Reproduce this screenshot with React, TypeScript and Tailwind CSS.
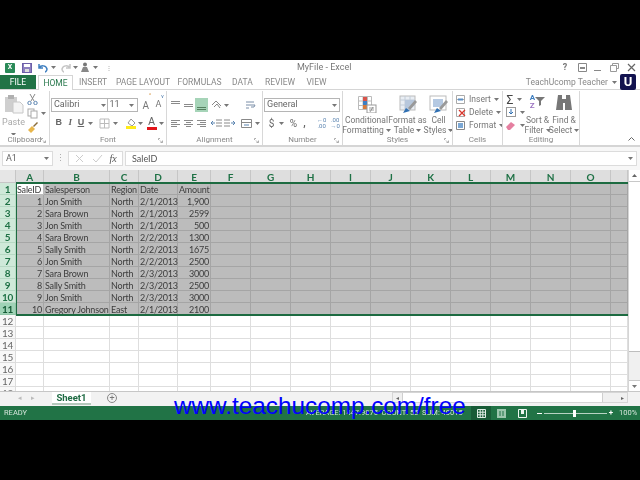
import type { ReactNode } from 'react'

const rows: string[][] = [
  ['SaleID', 'Salesperson', 'Region', 'Date', 'Amount'],
  ['1', 'Jon Smith', 'North', '2/1/2013', '1,900'],
  ['2', 'Sara Brown', 'North', '2/1/2013', '2599'],
  ['3', 'Jon Smith', 'North', '2/1/2013', '500'],
  ['4', 'Sara Brown', 'North', '2/2/2013', '1300'],
  ['5', 'Sally Smith', 'North', '2/2/2013', '1675'],
  ['6', 'Jon Smith', 'North', '2/2/2013', '2500'],
  ['7', 'Sara Brown', 'North', '2/3/2013', '3000'],
  ['8', 'Sally Smith', 'North', '2/3/2013', '2500'],
  ['9', 'Jon Smith', 'North', '2/3/2013', '3000'],
  ['10', 'Gregory Johnson', 'East', '2/1/2013', '2100']
]
const letters = ['A', 'B', 'C', 'D', 'E', 'F', 'G', 'H', 'I', 'J', 'K', 'L', 'M', 'N', 'O', '']
const gridCols =
  'grid grid-cols-[16px_28px_66px_29px_39px_33px_40px_40px_40px_40px_40px_40px_40px_40px_40px_40px_17px]'

function Caret({ className = 'mx-[3px]' }: { className?: string }): React.JSX.Element {
  return (
    <svg width="5" height="3" viewBox="0 0 5 3" className={`shrink-0 ${className}`}>
      <path d="M0 0h5L2.5 3z" fill="#777" />
    </svg>
  )
}

function Ico({
  w = 11,
  h = 11,
  children,
  className = ''
}: {
  w?: number
  h?: number
  children: ReactNode
  className?: string
}): React.JSX.Element {
  return (
    <svg width={w} height={h} viewBox={`0 0 ${w} ${h}`} className={`shrink-0 ${className}`} fill="none">
      {children}
    </svg>
  )
}

function Lines({ kind }: { kind: 'left' | 'center' | 'right' }): React.JSX.Element {
  const x = kind === 'left' ? [1, 1, 1, 1] : kind === 'center' ? [1, 3, 1, 3] : [1, 4, 1, 4]
  const w = kind === 'center' ? [9, 5, 9, 5] : [9, 6, 9, 6]
  return (
    <Ico>
      {[2, 4, 6, 8].map((y, i) => (
        <rect key={y} x={x[i]} y={y} width={w[i]} height="1" fill="#8a8a8a" />
      ))}
    </Ico>
  )
}

function Group({
  width,
  label,
  launcher,
  children
}: {
  width: string
  label: string
  launcher?: boolean
  children: ReactNode
}): React.JSX.Element {
  return (
    <div className={`${width} flex h-[54px] shrink-0 flex-col border-r border-[#d8d8d8]`}>
      <div className="h-[44px] shrink-0 overflow-hidden">{children}</div>
      <div className="relative flex h-[10px] items-center justify-center text-[8px] leading-none text-[#888]">
        {label}
        {launcher && (
          <svg width="5" height="5" viewBox="0 0 5 5" className="absolute right-[3px] top-[3px]">
            <path d="M.5 2V.5H2M2 2.5l2 2M2.5 4.5H4.5V2.5" stroke="#999" strokeWidth=".8" fill="none" />
          </svg>
        )}
      </div>
    </div>
  )
}

function Clipboard(): React.JSX.Element {
  return (
    <Group width="w-[50px]" label="Clipboard" launcher>
      <div className="flex">
        <div className="flex w-[28px] flex-col items-center pt-[3px]">
          <svg width="20" height="20" viewBox="0 0 20 20">
            <rect x="1" y="3" width="12" height="15" fill="#cfcfcf" />
            <rect x="4" y="1" width="6" height="4" fill="#b0b0b0" />
            <path d="M9 8h7l3 3v8H9z" fill="#f4f4f4" stroke="#c8c8c8" />
          </svg>
          <span className="mt-[3px] text-[9px] leading-[11px] text-[#aaa]">Paste</span>
          <Caret className="mt-[5px]" />
        </div>
        <div className="flex flex-col gap-[3px] pt-[3px]">
          <Ico w={11} h={11}>
            <path d="M3 0l4 7M8 0L4 7" stroke="#888" />
            <circle cx="2.5" cy="9" r="1.7" stroke="#5b84b0" />
            <circle cx="8.5" cy="9" r="1.7" stroke="#5b84b0" />
          </Ico>
          <div className="flex items-center">
            <Ico w={11} h={11}>
              <rect x="1" y="1" width="6" height="7" fill="#fff" stroke="#aaa" />
              <rect x="4" y="3" width="6" height="7" fill="#fff" stroke="#aaa" />
            </Ico>
            <Caret />
          </div>
          <Ico w={11} h={11}>
            <path d="M10 0L6 4l1 1 4-4z" fill="#8a6d3b" />
            <path d="M1 8l4-4 3 3-4 4z" fill="#e8b64c" />
          </Ico>
        </div>
      </div>
    </Group>
  )
}

function Font(): React.JSX.Element {
  return (
    <Group width="w-[117px]" label="Font" launcher>
      <div className="flex flex-col pl-[1px] pt-[7px]">
        <div className="flex h-[14px] items-center">
          <div className="flex h-[14px] w-[57px] items-center justify-between border border-[#b5b5b5] pl-[2px] pr-[1px] text-[9px] text-[#666]">
            Calibri
            <Caret className="" />
          </div>
          <div className="flex h-[14px] w-[31px] items-center justify-between border border-l-0 border-[#b5b5b5] pl-[2px] pr-[3px] text-[9px] text-[#666]">
            11
            <Caret className="" />
          </div>
          <span className="ml-[2px] flex w-[13px] justify-center text-[10px] text-[#777]">
            A<sup className="text-[5px] text-[#d08a30]">^</sup>
          </span>
          <span className="flex w-[13px] justify-center text-[9px] text-[#777]">
            A<sup className="text-[5px] text-[#3b6ea5]">v</sup>
          </span>
        </div>
        <div className="mt-[4px] flex h-[14px] items-center pl-[2px] font-['Liberation_Serif',serif] text-[9px] text-[#666]">
          <span className="w-[13px] text-center font-['Liberation_Sans',sans-serif] font-bold">B</span>
          <span className="w-[13px] text-center font-bold italic">I</span>
          <span className="w-[11px] text-center font-['Liberation_Sans',sans-serif] font-bold underline">U</span>
          <Caret className="mx-[2px]" />
          <Ico w={11} h={11} className="ml-[4px]">
            <path d="M1 1h9v9H1zM5.500 1v9M1 5.500h9" stroke="#bbb" />
          </Ico>
          <Caret className="mx-[3px]" />
          <div className="ml-[5px] flex w-[12px] flex-col items-center">
            <Ico w={10} h={8}>
              <path d="M5 1l4 4-3 3-4-3z" stroke="#999" fill="#fff" />
            </Ico>
            <div className="h-[3px] w-[10px] bg-[#ffeb1a]" />
          </div>
          <Caret className="mx-[2px]" />
          <div className="ml-[1px] flex w-[12px] flex-col items-center">
            <span className="font-['Liberation_Sans',sans-serif] text-[10px] leading-[9px] text-[#666]">A</span>
            <div className="mt-[1px] h-[3px] w-[10px] bg-[#e3141a]" />
          </div>
          <Caret className="mx-[2px]" />
        </div>
      </div>
    </Group>
  )
}

function Alignment(): React.JSX.Element {
  return (
    <Group width="w-[96px]" label="Alignment" launcher>
      <div className="flex flex-col pl-[2px] pt-[7px]">
        <div className="flex h-[14px] items-center">
          <div className="flex w-[13px] justify-center">
            <Ico>
              <rect x="1" y="1" width="9" height="1" fill="#8a8a8a" />
              <rect x="1" y="3" width="9" height="1" fill="#8a8a8a" />
            </Ico>
          </div>
          <div className="flex w-[13px] justify-center">
            <Ico>
              <rect x="1" y="4" width="9" height="1" fill="#8a8a8a" />
              <rect x="1" y="6" width="9" height="1" fill="#8a8a8a" />
            </Ico>
          </div>
          <div className="flex h-[14px] w-[13px] items-center justify-center bg-[#a6d4b8]">
            <Ico>
              <rect x="1" y="7" width="9" height="1" fill="#55805f" />
              <rect x="1" y="9" width="9" height="1" fill="#55805f" />
            </Ico>
          </div>
          <div className="ml-[2px] flex w-[13px] justify-center">
            <Ico>
              <path d="M1 5l4-4 5 5M3 7l3-3 3 4" stroke="#888" />
            </Ico>
          </div>
          <Caret className="mx-[1px]" />
          <div className="ml-[14px] flex w-[13px] justify-center">
            <Ico>
              <path d="M1 2h8M1 5h9l-1 2H6M1 8h3" stroke="#7b8ea8" />
            </Ico>
          </div>
        </div>
        <div className="mt-[4px] flex h-[14px] items-center">
          <div className="flex w-[13px] justify-center">
            <Lines kind="left" />
          </div>
          <div className="flex w-[13px] justify-center">
            <Lines kind="center" />
          </div>
          <div className="flex w-[13px] justify-center">
            <Lines kind="right" />
          </div>
          <div className="ml-[2px] flex w-[13px] justify-center">
            <Ico>
              <path d="M5 2h6M5 5h6M5 8h6" stroke="#8a8a8a" />
              <path d="M4 5H0m2-2L0 5l2 2" stroke="#5b84b0" />
            </Ico>
          </div>
          <div className="flex w-[13px] justify-center">
            <Ico>
              <path d="M0 2h6M0 5h6M0 8h6" stroke="#8a8a8a" />
              <path d="M7 5h4M9 3l2 2-2 2" stroke="#5b84b0" />
            </Ico>
          </div>
          <div className="ml-[4px] flex w-[13px] justify-center">
            <Ico>
              <path d="M.5 1.500h10v8H.5zM.5 4.500h10" stroke="#888" />
              <path d="M3 7h5" stroke="#5b84b0" />
            </Ico>
          </div>
          <Caret className="mx-[2px]" />
        </div>
      </div>
    </Group>
  )
}

function NumberGroup(): React.JSX.Element {
  return (
    <Group width="w-[80px]" label="Number" launcher>
      <div className="flex flex-col pl-[1px] pt-[7px]">
        <div className="flex h-[14px] w-[76px] items-center justify-between border border-[#b5b5b5] pl-[2px] pr-[2px] text-[9px] text-[#666]">
          General
          <Caret className="" />
        </div>
        <div className="mt-[4px] flex h-[14px] items-center text-[10px] text-[#666]">
          <span className="w-[13px] pl-[3px] text-center">$</span>
          <Caret className="ml-[3px] mr-[4px]" />
          <span className="w-[12px] text-center">%</span>
          <span className="w-[12px] text-center font-bold leading-[6px]">,</span>
          <span className="ml-[5px] w-[15px] text-center text-[6px] leading-[6px] text-[#5b84b0]">
            ←0
            <br />
            .00
          </span>
          <span className="w-[15px] text-center text-[6px] leading-[6px] text-[#5b84b0]">
            .00
            <br />
            →0
          </span>
        </div>
      </div>
    </Group>
  )
}

function BigButton({
  width,
  icon,
  top,
  bottom
}: {
  width: string
  icon: ReactNode
  top: string
  bottom: string
}): React.JSX.Element {
  return (
    <div className={`${width} flex flex-col items-center pt-[4px] text-[8.5px] leading-[10px] text-[#777]`}>
      <div className="h-[20px]">{icon}</div>
      <span className="whitespace-nowrap">{top}</span>
      <span className="flex items-center whitespace-nowrap">
        {bottom}
        <Caret className="ml-[2px]" />
      </span>
    </div>
  )
}

function Styles(): React.JSX.Element {
  return (
    <Group width="w-[110px]" label="Styles" launcher>
      <div className="flex pl-[1px]">
        <BigButton
          width="w-[45px]"
          top="Conditional"
          bottom="Formatting"
          icon={
            <Ico w={20} h={18}>
              <path d="M1.500 1.500h13v13h-13zM6 1.500v13M10.500 1.500v13M1.500 6h13M1.500 10.500h13" stroke="#bbb" />
              <rect x="6" y="2" width="4" height="4" fill="#d9534a" />
              <rect x="6" y="6" width="4" height="4" fill="#3b7fc4" />
              <rect x="6" y="10" width="4" height="4" fill="#d87a3a" />
              <rect x="10" y="10" width="9" height="8" fill="#fff" stroke="#999" />
              <path d="M12 13h5M12 15h5M16 12l-3 5" stroke="#777" strokeWidth=".7" />
            </Ico>
          }
        />
        <BigButton
          width="w-[37px]"
          top="Format as"
          bottom="Table"
          icon={
            <Ico w={20} h={18}>
              <rect x="2" y="1" width="15" height="14" fill="#e9eef4" stroke="#bbb" />
              <path d="M7 1v14M12 1v14M2 5h15M2 10h15" stroke="#c2ccd8" />
              <path d="M7 5h10v5l-6 5H7z" fill="#b7c7dc" />
              <path d="M5 18l3-5 4 3z" fill="#2f6fb2" />
              <path d="M10 13l7-8 2 2-7 8z" fill="#999" />
            </Ico>
          }
        />
        <BigButton
          width="w-[25px]"
          top="Cell"
          bottom="Styles"
          icon={
            <Ico w={20} h={18}>
              <rect x="1" y="1" width="16" height="14" fill="#fff" stroke="#bbb" />
              <rect x="4" y="4" width="10" height="8" fill="#b5c9e2" />
              <path d="M5 18l3-5 4 3z" fill="#2f6fb2" />
              <path d="M10 13l7-8 2 2-7 8z" fill="#999" />
            </Ico>
          }
        />
      </div>
    </Group>
  )
}

function CellRow({ icon, label }: { icon: ReactNode; label: string }): React.JSX.Element {
  return (
    <div className="flex h-[13px] items-center text-[8.5px] text-[#777]">
      {icon}
      <span className="ml-[3px]">{label}</span>
      <Caret className="ml-[3px]" />
    </div>
  )
}

function Cells(): React.JSX.Element {
  return (
    <Group width="w-[50px]" label="Cells">
      <div className="flex flex-col pl-[3px] pt-[2px]">
        <CellRow
          label="Insert"
          icon={
            <Ico w={10} h={10}>
              <path d="M.5.500h8v8h-8zM.5 4.500h8" stroke="#aaa" />
              <path d="M2 4.500h5" stroke="#5b8fc4" strokeWidth="2" />
            </Ico>
          }
        />
        <CellRow
          label="Delete"
          icon={
            <Ico w={10} h={10}>
              <path d="M.5.500h8v8h-8z" stroke="#aaa" />
              <path d="M3 2l6 6M9 2L3 8" stroke="#d9362c" strokeWidth="1.300" />
            </Ico>
          }
        />
        <CellRow
          label="Format"
          icon={
            <Ico w={10} h={10}>
              <path d="M.5.500h8v8h-8z" stroke="#888" />
              <rect x="2" y="2" width="5" height="5" fill="#7ba7d4" />
            </Ico>
          }
        />
      </div>
    </Group>
  )
}

function Editing(): React.JSX.Element {
  return (
    <Group width="w-[77px]" label="Editing">
      <div className="flex">
        <div className="flex w-[22px] flex-col pl-[3px] pt-[2px]">
          <div className="flex h-[13px] items-center">
            <span className="w-[11px] text-center text-[12px] leading-none text-[#444]">Σ</span>
            <Caret />
          </div>
          <div className="flex h-[13px] items-center">
            <Ico>
              <rect x=".5" y=".5" width="9" height="9" fill="#fff" stroke="#999" />
              <path d="M5 2v5M3 5l2 2 2-2" stroke="#2f6fb2" />
            </Ico>
            <Caret />
          </div>
          <div className="flex h-[13px] items-center">
            <Ico>
              <path d="M0 7l5-5 4 3-5 5H2z" fill="#e57fa0" />
            </Ico>
            <Caret />
          </div>
        </div>
        <div className="flex w-[25px] flex-col items-center pt-[3px] text-[8.5px] leading-[10px] text-[#777]">
          <div className="flex h-[21px] items-start">
            <span className="flex flex-col text-[8px] font-bold leading-[8px]">
              <span className="text-[#3f7fc0]">A</span>
              <span className="text-[#9a70c0]">Z</span>
            </span>
            <Ico w={10} h={10} className="mt-[2px]">
              <path d="M0 1h10L6 5v4L4 10V5z" fill="#777" />
            </Ico>
          </div>
          <span className="whitespace-nowrap">Sort &amp;</span>
          <span className="flex items-center whitespace-nowrap">
            Filter
            <Caret className="ml-[2px]" />
          </span>
        </div>
        <div className="flex w-[28px] flex-col items-center pt-[3px] text-[8.5px] leading-[10px] text-[#777]">
          <div className="h-[21px]">
            <Ico w={18} h={17}>
              <path d="M3 1h4v4h4V1h4l2 15h-7V9H8v7H1z" fill="#777" />
            </Ico>
          </div>
          <span className="whitespace-nowrap">Find &amp;</span>
          <span className="flex items-center whitespace-nowrap">
            Select
            <Caret className="ml-[2px]" />
          </span>
        </div>
      </div>
    </Group>
  )
}

function TitleBar(): React.JSX.Element {
  return (
    <div className="relative flex h-[15px] items-center pl-[5px]">
      <div className="flex h-[10px] w-[10px] items-center justify-center rounded-[1px] bg-[#2a8a58] text-[7px] font-bold leading-none text-white">
        X
      </div>
      <Ico w={10} h={10} className="ml-[7px]">
        <rect x=".5" y=".5" width="9" height="9" fill="#8d80c0" stroke="#6d5fa8" />
        <rect x="2" y="1" width="6" height="3" fill="#fff" />
        <rect x="3" y="6" width="4" height="3" fill="#ddd" />
      </Ico>
      <Ico w={10} h={10} className="ml-[6px]">
        <path d="M1 1v4h4M1 5c2-3 7-3 8 1 0 1-1 3-2 3" stroke="#3f7fc0" strokeWidth="1.500" />
      </Ico>
      <Caret className="mx-[3px]" />
      <Ico w={10} h={10} className="ml-[2px]">
        <path d="M9 1v4H5M9 5C7 2 2 2 1 6c0 1 1 3 2 3" stroke="#c5c5c5" strokeWidth="1.500" />
      </Ico>
      <Caret className="ml-[2px] mr-[1px]" />
      <Ico w={10} h={11} className="ml-[1px]">
        <circle cx="5" cy="2.500" r="2" fill="#777" />
        <path d="M3 5h4l2 5H1z" fill="#888" />
      </Ico>
      <Caret className="mx-[3px]" />
      <span className="ml-[5px] text-[6px] leading-none text-[#999]">⋮</span>
      <span className="absolute left-[297px] top-[2px] text-[9px] leading-[11px] text-[#777]">MyFile - Excel</span>
      <div className="absolute right-[4px] top-0 flex h-[15px] items-center text-[#777]">
        <span className="w-[10px] text-center text-[9px] font-bold">?</span>
        <Ico w={9} h={9} className="ml-[8px]">
          <path d="M.5.500h8v8h-8z" stroke="#888" />
          <path d="M2 4h5v2H2z" fill="#888" />
        </Ico>
        <Ico w={10} h={9} className="ml-[6px]">
          <rect x="1" y="7" width="7" height="1" fill="#888" />
        </Ico>
        <Ico w={9} h={9} className="ml-[7px]">
          <path d="M2.500 2.500V.5h6v5h-2M.5 2.500h6v6h-6z" stroke="#999" />
        </Ico>
        <Ico w={9} h={9} className="ml-[8px]">
          <path d="M1 1l7 7M8 1L1 8" stroke="#666" strokeWidth="1.200" />
        </Ico>
      </div>
    </div>
  )
}

function TabBar(): React.JSX.Element {
  const tabs = [
    ['INSERT', 'w-[24px] ml-[8px]'],
    ['PAGE LAYOUT', 'w-[46px] ml-[15px]'],
    ['FORMULAS', 'w-[37px] ml-[15px]'],
    ['DATA', 'w-[19px] ml-[15px]'],
    ['REVIEW', 'w-[26px] ml-[15px]'],
    ['VIEW', 'w-[17px] ml-[15px]']
  ]
  return (
    <div className="relative flex h-[15px] items-stretch border-b border-[#d5d5d5] text-[8.5px] leading-none text-[#888]">
      <div className="flex w-[36px] items-center justify-center bg-[#217346] text-white">FILE</div>
      <div className="z-10 -mb-px ml-[2px] flex w-[35px] items-center justify-center border border-b-0 border-[#d5d5d5] bg-white text-[#2b7a4f]">
        HOME
      </div>
      {tabs.map(([name, cls]) => (
        <div key={name} className={`${cls} flex items-center justify-center whitespace-nowrap`}>
          {name}
        </div>
      ))}
      <div className="ml-auto flex items-center pr-[4px] text-[8.5px]">
        <span>TeachUcomp Teacher</span>
        <Caret className="ml-[4px] mr-[3px]" />
        <div className="-mt-[1px] flex h-[16px] w-[16px] items-center justify-center rounded-[2px] bg-[#12124f] text-[13px] font-bold leading-none text-white">
          U
        </div>
      </div>
    </div>
  )
}

function FormulaBar(): React.JSX.Element {
  return (
    <div className="flex h-[24px] items-start border-t border-[#d5d5d5] bg-[#f7f7f7] pl-[2px] pt-[4px] text-[9px] text-[#666]">
      <div className="flex h-[15px] w-[51px] items-center justify-between border border-[#dcdcdc] bg-white pl-[3px] pr-[3px]">
        A1
        <Caret className="" />
      </div>
      <span className="w-[15px] text-center leading-[15px] text-[#aaa]">⋮</span>
      <div className="flex h-[15px] w-[55px] items-center justify-around border border-[#dcdcdc] bg-white px-[2px]">
        <Ico>
          <path d="M2 2l7 7M9 2L2 9" stroke="#ccc" />
        </Ico>
        <Ico>
          <path d="M1 6l3 3 6-7" stroke="#ccc" />
        </Ico>
        <span className="font-['Liberation_Serif',serif] text-[10px] italic text-[#555]">fx</span>
      </div>
      <div className="ml-[2px] flex h-[15px] w-[512px] items-center justify-between border border-[#dcdcdc] bg-white pl-[6px] pr-[3px] font-['Lato',sans-serif] text-[#555]">
        SaleID
        <Caret className="" />
      </div>
    </div>
  )
}

function Sheet(): React.JSX.Element {
  return (
    <div className="flex h-[221px] overflow-hidden">
      <div className="relative w-[628px] shrink-0 overflow-hidden font-['Lato',sans-serif] text-[9px] leading-[12px] tracking-[-0.2px] text-[#3c3c3c]">
        <div className={`${gridCols} h-[13px]`}>
          <div className="border-b border-r border-[#c6c6c6] bg-[#e6e6e6]" />
          {letters.map((c, i) => (
            <div
              key={i}
              className="flex h-[13px] items-center justify-center border-r border-[#c6c6c6] bg-[#dedede] text-[10px] font-bold leading-none text-[#1e7145]"
            >
              {c}
            </div>
          ))}
        </div>
        {Array.from({ length: 18 }).map((_, r) => {
          const sel = r < 11
          return (
            <div key={r} className={`${gridCols} h-[12px]`}>
              <div
                className={`flex h-[12px] items-center justify-center border-b border-r text-[10px] leading-none ${
                  r === 10
                    ? 'border-[#8fc4a6] bg-[#9fd3b6] font-bold text-[#155c36]'
                    : sel
                      ? 'border-[#b7d9c4] bg-[#cfe9d9] font-bold text-[#1e7145]'
                      : 'border-[#dcdcdc] bg-[#f8f8f8] text-[#666]'
                }`}
              >
                {r + 1}
              </div>
              {letters.map((_, c) => {
                const val = sel && c < 5 ? rows[r][c] : ''
                const right = r > 0 && (c === 0 || c === 3 || c === 4)
                const bg =
                  r === 0 && c === 0
                    ? 'bg-white border-[#bbb]'
                    : sel
                      ? 'bg-[#bcbcbc] border-[#a5a5a5]'
                      : 'bg-white border-[#dedede]'
                return (
                  <div
                    key={c}
                    className={`h-[12px] overflow-visible whitespace-nowrap border-b border-r px-[1px] pt-[1px] ${bg} ${
                      right ? 'text-right' : ''
                    }`}
                  >
                    {val}
                  </div>
                )
              })}
            </div>
          )
        })}
        <div className="pointer-events-none absolute left-[16px] right-0 top-[12px] h-[134px] border-y-2 border-l border-[#1d6b41]" />
      </div>
      <div className="flex w-[12px] flex-col border-l border-[#d5d5d5] bg-[#f0f0f0]">
        <div className="flex h-[12px] items-center justify-center border-b border-[#c8c8c8] bg-white">
          <svg width="5" height="3" viewBox="0 0 5 3">
            <path d="M0 3h5L2.500 0z" fill="#666" />
          </svg>
        </div>
        <div className="h-[170px] border-b border-[#bdbdbd] bg-white" />
        <div className="flex-1" />
        <div className="flex h-[11px] items-center justify-center border-t border-[#c8c8c8] bg-white">
          <Caret className="" />
        </div>
      </div>
    </div>
  )
}

function SheetTabs(): React.JSX.Element {
  return (
    <div className="flex h-[15px] items-start border-t border-[#c6c6c6] bg-[#f2f2f2]">
      <div className="flex h-[13px] w-[52px] items-center justify-center gap-[9px] text-[7px] text-[#bbb]">
        <span>◂</span>
        <span>▸</span>
      </div>
      <div className="flex h-[13px] w-[39px] items-center justify-center border-b-2 border-[#b5c9bc] bg-white text-[9.5px] font-bold leading-none text-[#1f6b44]">
        Sheet1
      </div>
      <div className="ml-[16px] mt-[1px] flex h-[10px] w-[10px] items-center justify-center rounded-full border border-[#888] text-[9px] leading-none text-[#777]">
        +
      </div>
      <div className="ml-[275px] flex h-[11px] w-[236px] items-center border border-[#d5d5d5] bg-[#f0f0f0]">
        <div className="flex w-[9px] justify-center text-[6px] text-[#666]">◂</div>
        <div className="h-[9px] w-[201px] border-x border-[#cfcfcf] bg-white" />
        <div className="flex-1" />
        <div className="flex w-[9px] justify-center text-[6px] text-[#666]">▸</div>
      </div>
    </div>
  )
}

function StatusBar(): React.JSX.Element {
  return (
    <div className="relative flex h-[14px] items-center bg-[#217346] pl-[4px] text-[7.5px] leading-none text-[#d5e5db]">
      <span>READY</span>
      <span className="ml-[279px] whitespace-nowrap">AVERAGE: 1447.9875&nbsp;&nbsp;COUNT: 55&nbsp;&nbsp;SUM: 40015</span>
      <div className="ml-auto flex h-[14px] items-center pr-[4px]">
        <div className="flex h-[14px] w-[20px] items-center justify-center bg-[#185c37]">
          <Ico w={9} h={9}>
            <path d="M.5.500h8v8h-8zM3.200.5v8M5.800.5v8M.5 3.200h8M.5 5.800h8" stroke="#dfeee6" />
          </Ico>
        </div>
        <div className="flex w-[21px] justify-center">
          <Ico w={9} h={9}>
            <rect width="9" height="9" fill="#9cc7ae" />
            <path d="M3 2v5M6 2v5" stroke="#217346" />
          </Ico>
        </div>
        <div className="flex w-[21px] justify-center">
          <Ico w={9} h={9}>
            <path d="M.5.500h8v8h-8z" stroke="#eef6f1" />
            <path d="M3 1h3v4H3z" fill="#eef6f1" />
          </Ico>
        </div>
        <div className="ml-[4px] flex w-[76px] items-center">
          <span className="h-[1px] w-[5px] bg-white" />
          <div className="relative mx-[2px] h-[1px] flex-1 bg-[#b7d3c3]">
            <span className="absolute left-[29px] top-[-3px] h-[7px] w-[3px] bg-white" />
          </div>
          <span className="text-[8px] font-bold leading-none text-white">+</span>
        </div>
        <span className="ml-[6px] w-[17px] text-right text-[7.5px]">100%</span>
      </div>
    </div>
  )
}

export default function App(): React.JSX.Element {
  return (
    <div className="relative h-[480px] w-[640px] overflow-hidden bg-black font-['Roboto',sans-serif]">
      <div className="pt-[60px] blur-[0.4px]">
        <div className="h-[360px] w-[640px] bg-white">
          <TitleBar />
          <TabBar />
          <div className="flex h-[56px] items-start border-b border-[#d5d5d5] pt-[1px]">
            <Clipboard />
            <Font />
            <Alignment />
            <NumberGroup />
            <Styles />
            <Cells />
            <Editing />
            <div className="flex h-[53px] flex-1 items-end justify-end pb-[3px] pr-[5px]">
              <svg width="7" height="4" viewBox="0 0 7 4">
                <path d="M.5 3.500l3-3 3 3" stroke="#666" fill="none" />
              </svg>
            </div>
          </div>
          <FormulaBar />
          <Sheet />
          <SheetTabs />
          <StatusBar />
        </div>
      </div>
      <div className="absolute left-[174px] top-[392px] whitespace-nowrap font-['Liberation_Sans',sans-serif] text-[24.3px] leading-[28px] text-[#0000ff]">
        www.teachucomp.com/free
      </div>
    </div>
  )
}
